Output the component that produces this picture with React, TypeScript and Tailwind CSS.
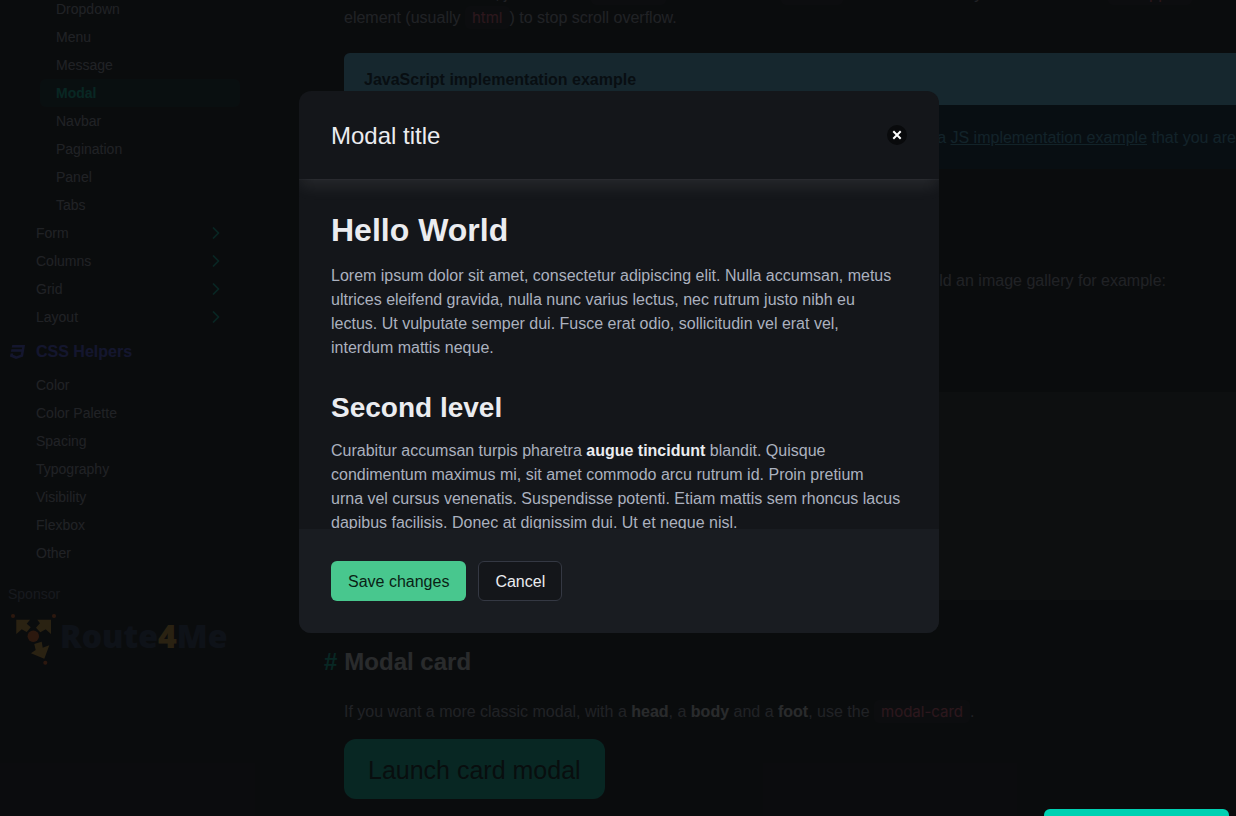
import { ChevronRight } from "lucide-react";
import { FaCss3 } from "react-icons/fa";
import type { ReactNode } from "react";

const components = ["Dropdown", "Menu", "Message", "Modal", "Navbar", "Pagination", "Panel", "Tabs"];
const sections = ["Form", "Columns", "Grid", "Layout"];
const helpers = ["Color", "Color Palette", "Spacing", "Typography", "Visibility", "Flexbox", "Other"];

function Code({ children }: { children: ReactNode }) {
  return (
    <code className="rounded-md bg-[#1f2229] px-[7px] py-[2px] font-[Inter,sans-serif] text-[15px] text-[#ff6685]">
      {children}
    </code>
  );
}

function RouteLogo() {
  return (
    <svg viewBox="0 0 48 52" className="h-[52px] w-12 shrink-0" aria-hidden="true">
      <g fill="#f0b23a">
        <path d="M6.300 5.700H20l-3.300 4 4 3.600-4 4.700-5-2.700-5.400 4.700z" />
        <path d="M41 5.700H27.300l2.700 3.600-4 4.400 4.300 4.600 5.400-3L41 20z" />
        <path d="M24.300 30l7.400-2.300 1 6 6.600-2.400-5 13.400L21 39.300l4.700-3.300z" />
      </g>
      <g fill="#ff6a1f">
        <circle cx="23.300" cy="22.300" r="5.700" />
        <circle cx="3" cy="2" r="2" />
        <circle cx="44" cy="2" r="2" />
        <circle cx="35.300" cy="48.700" r="2" />
      </g>
    </svg>
  );
}

function Sidebar() {
  return (
    <aside className="w-[300px] shrink-0 overflow-hidden text-sm leading-5 text-[#abb1bf]">
      <nav className="-mt-[5px]">
        <ul>
          {components.map((name) => (
            <li key={name} className="flex h-7 items-center pl-10">
              <a
                href="#"
                className={
                  name === "Modal"
                    ? "w-[200px] rounded-md bg-[#0d2b2f] px-4 py-1 font-bold text-[#00d1b2]"
                    : "w-[200px] px-4 py-1"
                }
              >
                {name}
              </a>
            </li>
          ))}
          {sections.map((name) => (
            <li key={name}>
              <a href="#" className="flex h-7 w-[226px] items-center justify-between pl-9">
                {name}
                <ChevronRight className="size-5 text-[#00d1b2]" strokeWidth={2} />
              </a>
            </li>
          ))}
        </ul>
        <a href="#" className="flex h-10 items-center gap-[10px] pt-[2px] pl-[10px] text-base font-bold text-[#5560ff]">
          <FaCss3 className="size-4" />
          CSS Helpers
        </a>
        <ul>
          {helpers.map((name) => (
            <li key={name}>
              <a href="#" className="flex h-7 items-center pl-9">
                {name}
              </a>
            </li>
          ))}
        </ul>
      </nav>
      <p className="mt-[17px] pl-2 text-[#69748c]">Sponsor</p>
      <a
        href="#"
        className="mt-[10px] flex items-center gap-[2px] pl-[10px] font-['Open_Sans',sans-serif] text-[32px] leading-[52px] font-extrabold text-[#2f4266]"
      >
        <RouteLogo />
        <span className="-mt-2">
          Route<span className="text-[#f0b23a]">4</span>Me
        </span>
      </a>
    </aside>
  );
}

function Content() {
  return (
    <main className="min-w-0 flex-1 pl-11 whitespace-nowrap text-[#abb1bf]">
      <p className="-mt-[18px] leading-6">
        To activate the modal, just add the <Code>is-active</Code> modifier on the <Code>.modal</Code> container. You
        may also want to add <Code>is-clipped</Code> modifier to a containing
        <br />
        element (usually <Code>html</Code>) to stop scroll overflow.
      </p>
      <article className="mt-[23px] overflow-hidden rounded-l-md bg-[#00263d]">
        <header className="bg-[#66d1ff] px-5 pt-[15px] pb-[13px] leading-6 font-bold text-[#002838]">
          JavaScript implementation example
        </header>
        <p className="flex justify-end pt-[21px] pb-[19px] leading-6 text-[#4cb4dd]">
          <span>
            The Bulma package does not come with JavaScript. Here is however a{" "}
            <a href="#" className="underline">JS implementation example</a> that you are
          </span>
        </p>
      </article>
      <p className="mt-[100px] pr-[70px] text-right leading-6">
        You can use any content inside the modal, to build an image gallery for example:
      </p>
      <div className="mt-[99px] h-52 bg-[#272b2c]" />
      <h2 className="mt-[46px] -ml-5 flex gap-[7px] text-2xl leading-8 font-bold text-[#ebecf0]">
        <a href="#" className="text-[#00d1b2]">#</a>
        Modal card
      </h2>
      <p className="mt-[22px] leading-6">
        If you want a more classic modal, with a <strong className="text-[#ebecf0]">head</strong>, a{" "}
        <strong className="text-[#ebecf0]">body</strong> and a <strong className="text-[#ebecf0]">foot</strong>, use the{" "}
        <Code>modal-card</Code>.
      </p>
      <button className="mt-[15px] rounded-xl bg-[#00d1b2] px-6 pt-[13px] pb-[11px] text-[25px] leading-9 text-[#002420]">
        Launch card modal
      </button>
    </main>
  );
}

function ModalCard() {
  return (
    <section
      role="dialog"
      aria-labelledby="modal-title"
      className="flex w-[640px] max-w-full flex-col overflow-hidden rounded-xl bg-[#14161a]"
    >
      <header className="z-10 flex items-center justify-between p-8 shadow-[0_8px_16px_-2px_rgba(235,236,240,0.1),0_0_0_1px_rgba(235,236,240,0.03)]">
        <h2 id="modal-title" className="pt-px text-2xl leading-[23px] text-[#ebecf0]">Modal title</h2>
        <button
          aria-label="close"
          className="flex size-5 items-center justify-center rounded-full bg-[#090a0c] text-white"
        >
          <svg viewBox="0 0 10 10" className="size-[10px]" stroke="currentColor" strokeWidth="2">
            <path d="M1.300 1.300l7.400 7.400M8.700 1.300l-7.400 7.400" />
          </svg>
        </button>
      </header>
      <div className="h-[350px] overflow-hidden px-8 pt-[33px] text-[#abb1bf]">
        <h1 className="text-[32px] leading-9 font-bold text-[#ebecf0]">Hello World</h1>
        <p className="mt-4 leading-6">
          Lorem ipsum dolor sit amet, consectetur adipiscing elit. Nulla accumsan, metus
          <br />
          ultrices eleifend gravida, nulla nunc varius lectus, nec rutrum justo nibh eu
          <br />
          lectus. Ut vulputate semper dui. Fusce erat odio, sollicitudin vel erat vel,
          <br />
          interdum mattis neque.
        </p>
        <h2 className="mt-8 text-[28px] leading-8 font-bold text-[#ebecf0]">Second level</h2>
        <p className="mt-[15px] leading-6">
          Curabitur accumsan turpis pharetra <strong className="text-[#ebecf0]">augue tincidunt</strong> blandit. Quisque
          <br />
          condimentum maximus mi, sit amet commodo arcu rutrum id. Proin pretium
          <br />
          urna vel cursus venenatis. Suspendisse potenti. Etiam mattis sem rhoncus lacus
          <br />
          dapibus facilisis. Donec at dignissim dui. Ut et neque nisl.
        </p>
      </div>
      <footer className="flex gap-3 bg-[#191c21] p-8">
        <button className="rounded-md bg-[#48c78e] px-[17px] pt-[9px] pb-[7px] leading-6 text-[#0a1f15]">
          Save changes
        </button>
        <button className="rounded-md border border-[#343843] bg-[#14161a] px-4 pt-2 pb-[6px] leading-6 text-[#ebecf0]">
          Cancel
        </button>
      </footer>
    </section>
  );
}

export default function App() {
  return (
    <div className="relative h-screen overflow-hidden bg-[#14161a] font-['Liberation_Sans',Arial,sans-serif] text-base">
      <div className="flex">
        <Sidebar />
        <Content />
      </div>
      <div className="absolute inset-0 flex items-start justify-center bg-[rgba(9,10,12,0.86)] pt-[91px] pl-[2px]">
        <ModalCard />
      </div>
      <div className="absolute right-[7px] bottom-0 h-[7px] w-[185px] rounded-t-md bg-[#00d1b2]" />
    </div>
  );
}
